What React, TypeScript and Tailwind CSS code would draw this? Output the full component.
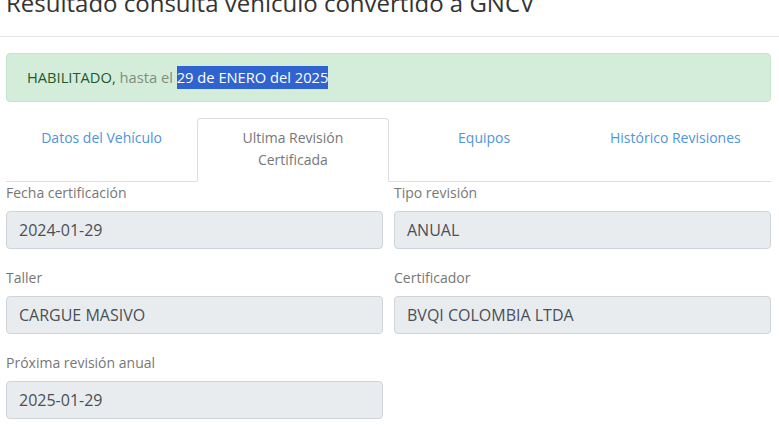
import React from 'react';

const tabs = [
  { id: 'datos', label: 'Datos del Vehículo' },
  { id: 'ultima', label: 'Ultima Revisión Certificada' },
  { id: 'equipos', label: 'Equipos' },
  { id: 'historico', label: 'Histórico Revisiones' },
];

const fields = [
  { label: 'Fecha certificación', value: '2024-01-29' },
  { label: 'Tipo revisión', value: 'ANUAL' },
  { label: 'Taller', value: 'CARGUE MASIVO' },
  { label: 'Certificador', value: 'BVQI COLOMBIA LTDA' },
  { label: 'Próxima revisión anual', value: '2025-01-29' },
];

export default function App() {
  const active = 'ultima';

  return (
    <div className="min-h-screen bg-white overflow-hidden" style={{ fontFamily: '"Open Sans", sans-serif' }}>
      <h3 className="-mt-[12px] mb-[19px] px-[6px] text-[24px] leading-[29px] text-[#333] whitespace-nowrap">
        Resultado consulta vehículo convertido a GNCV
      </h3>
      <hr className="border-t border-[#e5e5e5]" />

      <div className="pl-[6px] pr-[8px] pt-[16px]">
        <div className="mb-[16px] rounded-[4px] border border-[#c3e6cb] bg-[#d4edda] px-[20px] py-[12px] text-[14.7px] leading-[23px]">
          <span className="text-[#1d5a2c]">HABILITADO,</span>
          <span className="text-[#7d8f80]"> hasta el </span>
          <span className="inline-block bg-[#2f63cf] leading-[23px] text-white">29 de ENERO del 2025</span>
        </div>

        <ul className="grid grid-cols-4 border-b border-[#ddd] text-[14px] leading-[22px]">
          {tabs.map((tab) => (
            <li key={tab.id} className="-mb-px">
              {tab.id === active ? (
                <div className="rounded-t-[4px] border border-[#ddd] border-b-white bg-white px-[15px] pt-[8px] pb-[10px] text-center text-[#777]">
                  Ultima Revisión
                  <br />
                  Certificada
                </div>
              ) : (
                <a href="#" className="block border border-transparent px-[15px] pt-[8px] pb-[10px] text-center text-[#4f95db]">
                  {tab.label}
                </a>
              )}
            </li>
          ))}
        </ul>

        <div className="grid grid-cols-2 gap-x-[11px]">
          {fields.map((field) => (
            <div key={field.label} className="mb-[18px]">
              <label className="mb-[8px] block text-[14px] leading-[21px] text-[#777]">{field.label}</label>
              <div className="flex h-[38px] items-center rounded-[4px] border border-[#ced4da] bg-[#e9ecef] px-[12px] text-[16px] text-[#495057]">
                {field.value}
              </div>
            </div>
          ))}
        </div>
      </div>
    </div>
  );
}
